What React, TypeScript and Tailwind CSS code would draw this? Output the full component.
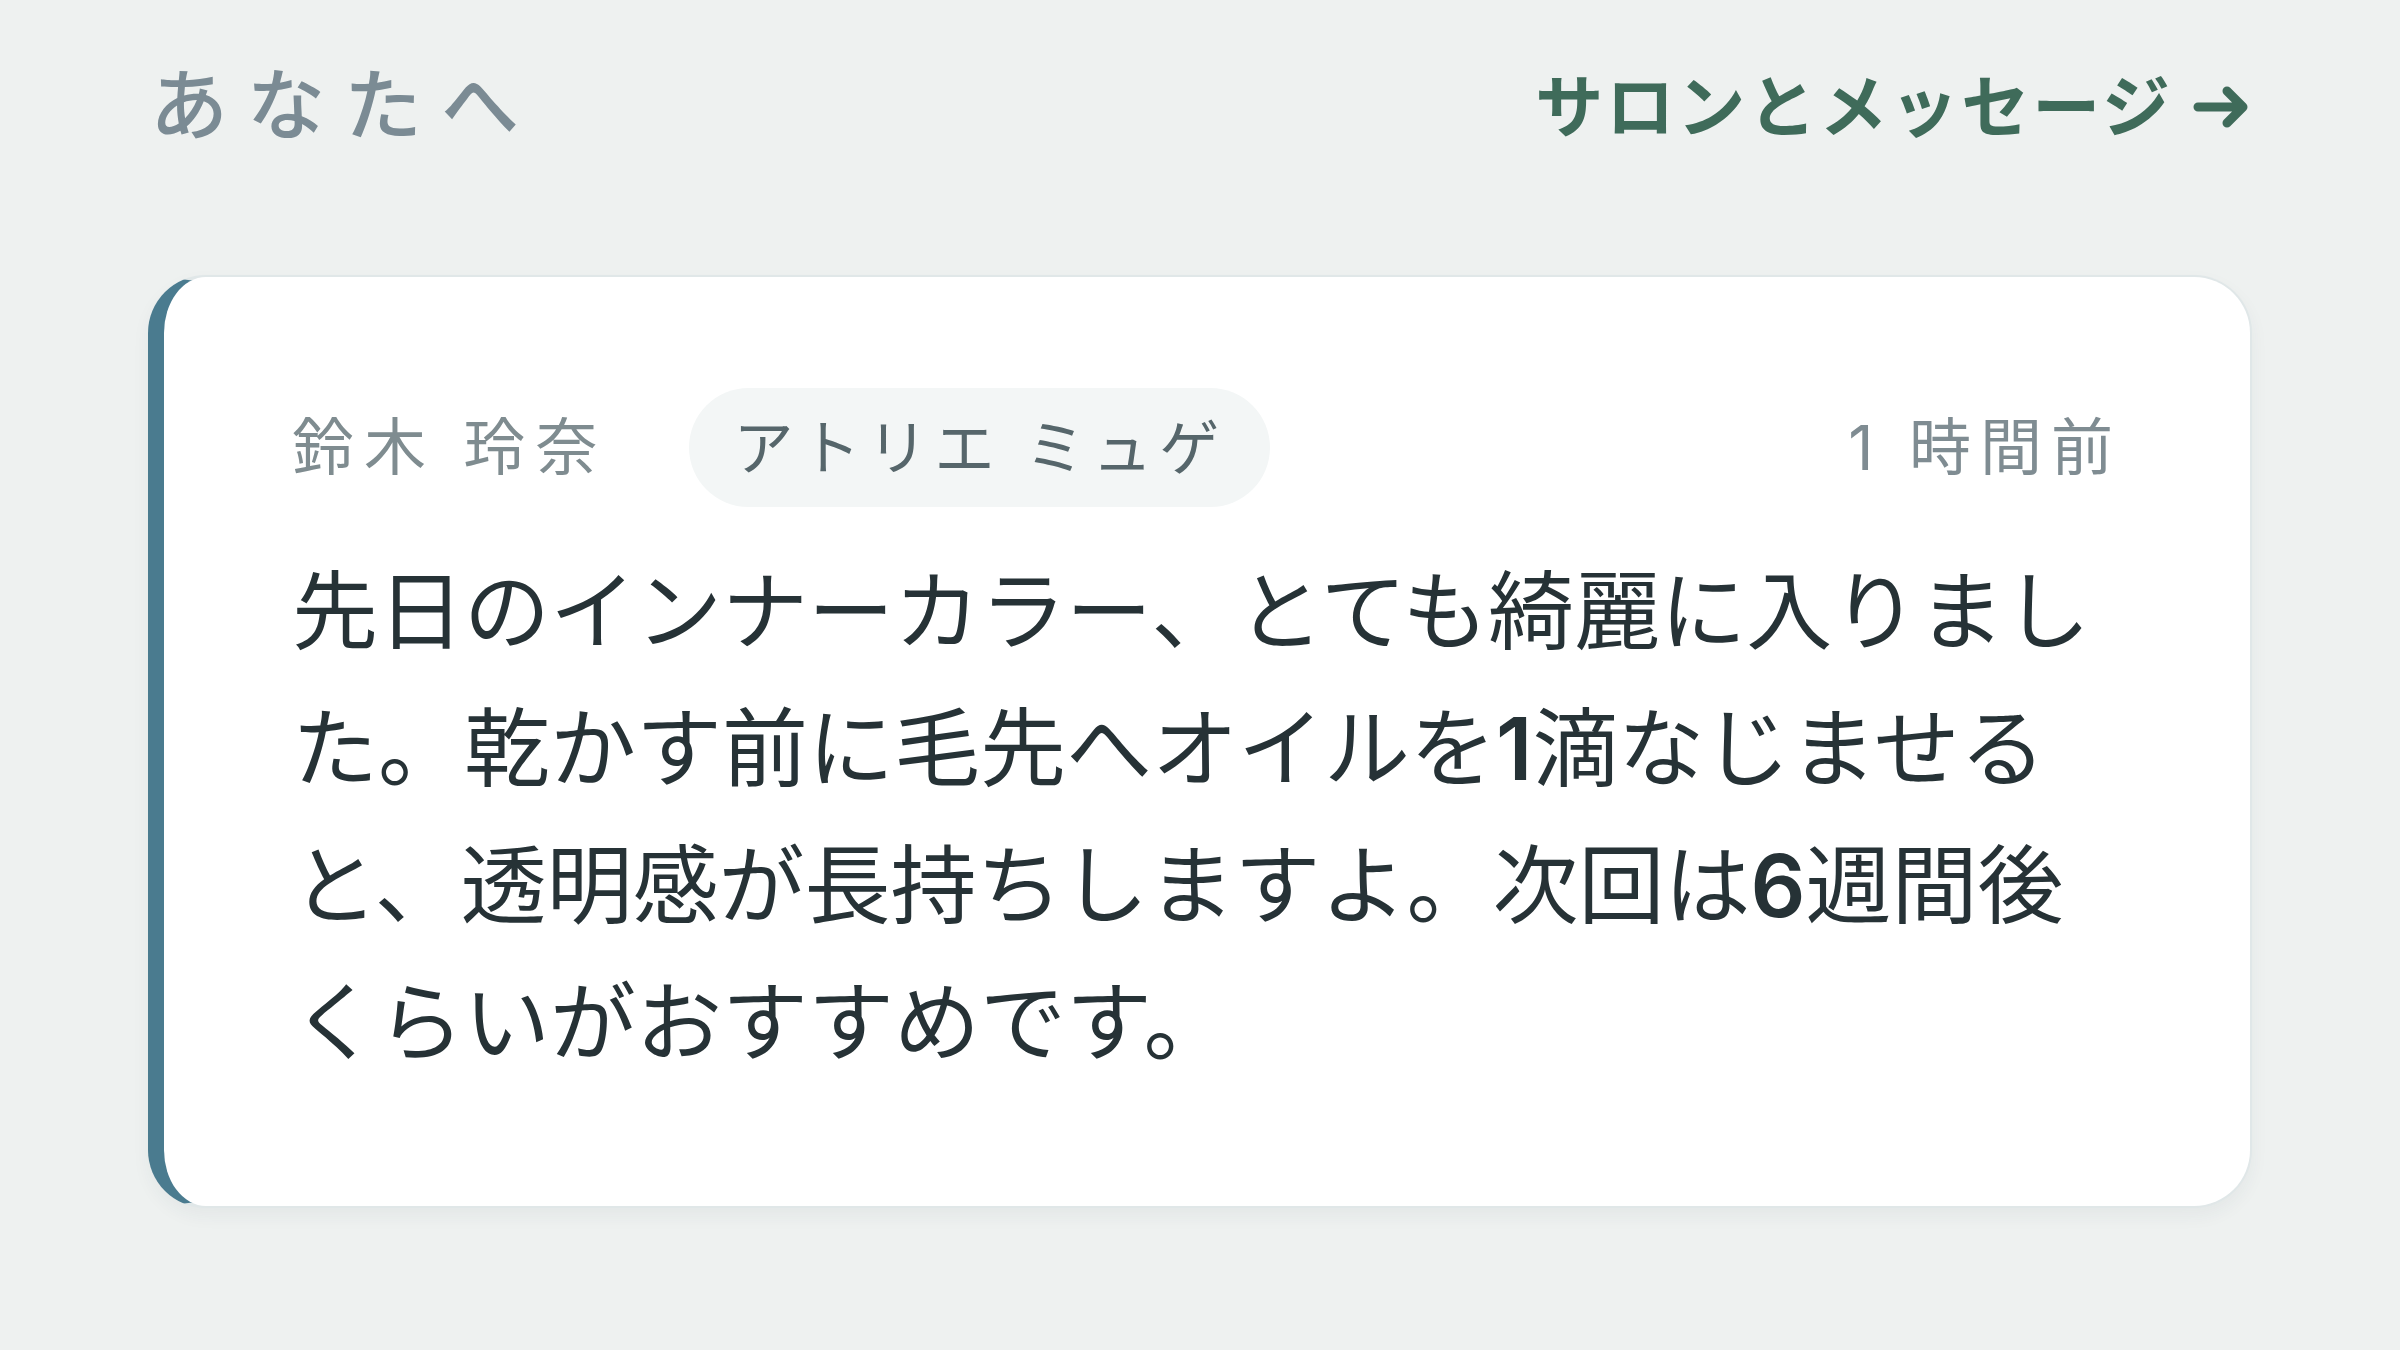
const ArrowRight = () => (
  <svg width="56" height="44" viewBox="0 0 56 44" fill="none" className="shrink-0">
    <path d="M5 22H50M34 6L50 22L34 38" stroke="currentColor" strokeWidth="9" strokeLinecap="round" strokeLinejoin="round" />
  </svg>
);

export default function App() {
  return (
    <div
      className="min-h-screen bg-[#eef1f0] px-[148px] pt-[52px] pb-[120px]"
      style={{ fontFamily: "Inter, 'Noto Sans CJK JP', sans-serif" }}
    >
      <header className="flex h-[110px] items-center justify-between">
        <h2
          className="pl-[2px] text-[78px] font-medium tracking-[19px] text-[#7b8b94]"
          style={{ fontFamily: "'Liberation Serif', 'Noto Sans CJK JP', serif" }}
        >
          あなたへ
        </h2>
        <a href="#" className="flex items-center gap-[20px] pr-[3px] text-[#3f6b5a]">
          <span className="text-[68px] font-bold tracking-[3px]">サロンとメッセージ</span>
          <ArrowRight />
        </a>
      </header>

      <article className="mt-[113px] rounded-[58px] border-2 border-l-[16px] border-[#e0e7e8] border-l-[#4a7b8f] bg-white pt-[111px] pr-[128px] pb-[114px] pl-[128px] shadow-[0_8px_18px_rgba(40,60,70,0.05)]">
        <div className="flex items-center">
          <span className="text-[62px] tracking-[10px] text-[#7f8c90]">鈴木 玲奈</span>
          <span className="ml-[82px] flex h-[119px] items-center rounded-full bg-[#f3f6f6] px-[44px] text-[60px] tracking-[7px] text-[#56666b]">
            アトリエ ミュゲ
          </span>
          <span className="ml-auto text-[62px] tracking-[9px] text-[#7f8c92]">1 時間前</span>
        </div>
        <p className="mt-[37px] text-[86px] leading-[137px] text-[#263236]">
          先日のインナーカラー、とても綺麗に入りました。乾かす前に毛先へオイルを<span className="font-semibold">1</span>滴なじませると、透明感が長持ちしますよ。次回は<span className="font-semibold">6</span>週間後くらいがおすすめです。
        </p>
      </article>
    </div>
  );
}
